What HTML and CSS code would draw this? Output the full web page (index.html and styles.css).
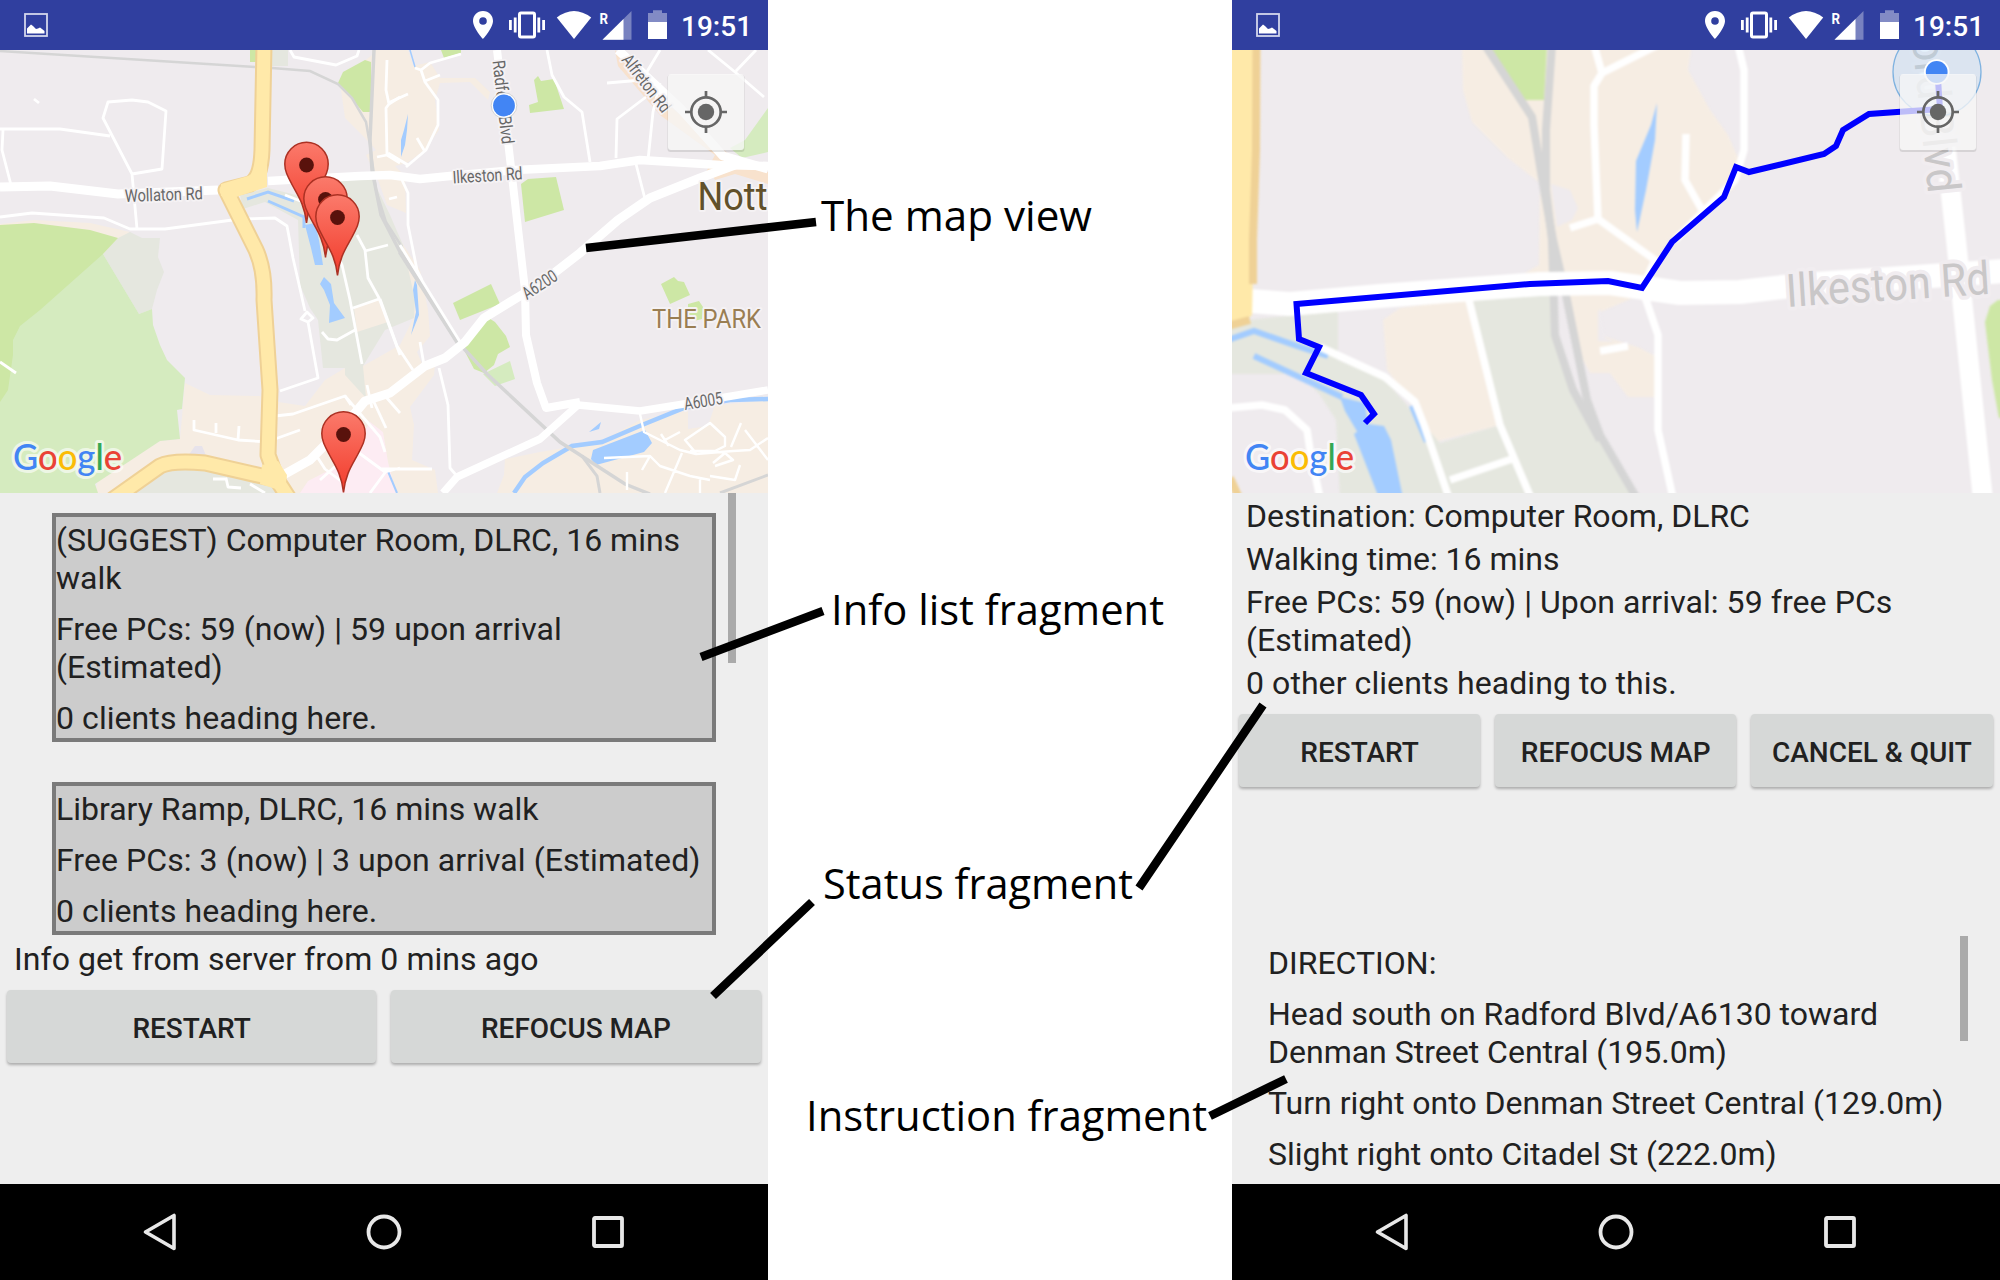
FILE: index.html
```html
<!DOCTYPE html>
<html lang="en">
<head>
<meta charset="utf-8">
<title>App fragments</title>
<link rel="stylesheet" href="styles.css">
</head>
<body>
<svg class="defs" width="0" height="0">
  <defs>
    <linearGradient id="pinFill" x1="0" y1="0" x2="0" y2="1"><stop offset="0" stop-color="#fb7a6b"/><stop offset="1" stop-color="#f23b2b"/></linearGradient>
    <symbol id="pic" viewBox="24 13 24 24">
      <rect x="25" y="14" width="22" height="22" fill="none" stroke="#d3d6ec" stroke-width="1.8"/>
      <path d="M27 33.500V28.500L29.500 26L31 24.500L33 26L36 29L38 28.500L40 27.500L42 29L44.500 31V33.500Z" fill="#fff"/>
    </symbol>
    <symbol id="status" viewBox="470 0 200 50">
      <path fill="#fff" fill-rule="evenodd" d="M483 11C477 11 473 15.500 473 21C473 28 483 39 483 39C483 39 493 28 493 21C493 15.500 489 11 483 11ZM483 17.200A3.800 3.800 0 1 1 483 24.800A3.800 3.800 0 1 1 483 17.200Z"/>
      <rect x="519.500" y="13" width="15" height="24" rx="1.500" fill="none" stroke="#fff" stroke-width="3"/>
      <path d="M515.200 17.500V32.500M510.400 20V30M538.800 17.500V32.500M543.600 20V30" stroke="#fff" stroke-width="2.800"/>
      <path d="M556.800 17.500Q574 4.500 591.200 17.500L574 39Z" fill="#fff"/>
      <text class="roam" x="599.500" y="23.500" textLength="8.500" lengthAdjust="spacingAndGlyphs">R</text>
      <path d="M602.500 39.700L631.500 11V39.700Z" fill="#fff" opacity=".35"/>
      <path d="M602.500 39.700L623.500 19V39.700Z" fill="#fff"/>
      <path d="M648 22V13H653V10.300H662V13H667V22Z" fill="#fff" opacity=".4"/>
      <path d="M648 22H667V39H648Z" fill="#fff"/>
    </symbol>
    <symbol id="back" viewBox="0 0 40 40"><path d="M34 3.500V36.500L5.500 20Z" fill="none" stroke="#e8e8e8" stroke-width="3.600" stroke-linejoin="round"/></symbol>
    <symbol id="home" viewBox="0 0 40 40"><circle cx="20" cy="20" r="15.500" fill="none" stroke="#e8e8e8" stroke-width="3.800"/></symbol>
    <symbol id="recent" viewBox="0 0 40 40"><rect x="6" y="6" width="28" height="28" rx="1" fill="none" stroke="#e8e8e8" stroke-width="3.800"/></symbol>
    <g id="pin">
      <path d="M0 58C-2 39 -9 30 -14.500 19.500C-19 11 -21.700 6 -21.700 -1A21.700 21.700 0 0 1 21.700 -1C21.700 6 19 11 14.500 19.500C9 30 2 39 0 58Z" fill="url(#pinFill)" stroke="#ac3123" stroke-width="1.500"/>
      <circle r="7.400" fill="#59120c"/>
    </g>
    <g id="target">
      <rect x="667.500" y="74.500" width="77" height="77.500" rx="3" fill="#000" opacity=".1"/>
      <rect x="668" y="74" width="76" height="76" rx="3" fill="#fff" opacity=".74"/>
      <circle cx="706" cy="112" r="14.700" fill="none" stroke="#666" stroke-width="2.700"/>
      <circle cx="706" cy="112" r="8.200" fill="#666"/>
      <path d="M706 91V98M706 126V133M685 112H692M720 112H727" stroke="#666" stroke-width="2.700"/>
    </g>
  </defs>
</svg>
<main class="board">
  <section class="phone">
    <header class="statusbar">
      <svg class="pic"><use href="#pic"/></svg>
      <svg class="status"><use href="#status"/></svg>
      <span class="clock">19:51</span>
    </header>
    <svg class="map" viewBox="0 50 768 443">
      <rect y="50" width="768" height="443" fill="#efebee"/>
      <g fill="#f6ede3">
        <path d="M0 224L34 220L90 223L130 232L118 240L100 260L60 235L0 230Z"/>
        <path d="M341 90L350 72L372 55L372 50H408L413 66L430 62L440 78L475 78L490 92L488 100L470 82L440 83L435 100L439 130L425 150L407 163L395 166L405 176L406 213L387 205L378 180L366 155L376 150L365 138L345 118Z"/>
        <path d="M185 383L210 395L260 396L278 402L305 406L325 380L345 368L363 366L400 345L414 317L354 333L351 308L380 299L400 240L420 270L428 310L430 336L417 352L424 368L435 365L434 375L410 407L414 425L412 460L435 470L438 493H95L98 480L160 441L180 439Z"/>
        <path d="M505 459L504 475L497 493H768V400L720 405L690 410L640 420L600 442L540 452Z"/>
        <path d="M615 50L625 62L672 108L730 155L715 175L706 172L715 155L660 115L618 66Z" fill="#f8e2cd"/>
        <path d="M708 168L722 154L768 172V184L735 174L715 180Z" fill="#f8e2cd"/>
      </g>
      <g fill="#e5e7df">
        <path d="M118 238L130 232L142 238L160 238L158 257L164 272L157 290L152 309L139 314L103 254Z"/>
        <path d="M240 195L268 188L300 196L305 187L345 178L372 178L390 215L403 245L415 300L414 318L385 330L363 366L366 398L345 375V368L323 368L318 320L310 308L300 285L298 220L265 202L243 209Z"/>
        <path d="M130 493L160 470L200 466L270 479L295 493Z"/>
        <path d="M272 50H288V66H272Z"/>
      </g>
      <path d="M354 308L380 299L388 322L357 332Z" fill="#f6ede3"/>
      <path d="M688 409L715 405L708 426L688 429Z" fill="#efebee"/>
      <path d="M300 493L308 481L345 462L370 422L383 432L388 462L396 493Z" fill="#fdecf3"/>
      <path d="M188 456L195 446L202 446L207 458Z" fill="#e7e3eb"/>
      <path d="M103 254L139 314L152 309L153 325L160 345L167 360L185 378L182 409L177 410L180 439L160 441L95 484L98 493H0V225H34Z" fill="#d5ebbf"/>
      <g fill="#cde7a5">
        <path d="M0 225L34 223L90 230L118 238L103 254L40 310L20 326L13 340L13 355L8 390L0 402Z"/>
        <path d="M343 72L365 60L371 62V112H363L338 83Z"/>
        <path d="M250 50H258V62H250Z"/>
        <path d="M441 50H461V53L444 58Z"/>
        <path d="M534 80L538 76L541 81L554 79L564 109L530 113L529 105L538 102Z"/>
        <path d="M521 184L528 179L556 177L564 210L525 222Z"/>
        <path d="M453 303L491 284L500 304L460 320Z"/>
        <path d="M463 348L484 315L495 322L506 336L510 347L498 354L494 365L484 373L474 369Z"/>
        <path d="M661 284L674 277L678 281L684 282L690 295L670 304Z"/>
        <path d="M688 304L699 301L703 307L702 319L694 321L688 315Z"/>
      </g>
      <path d="M483 374L510 361L515 379L495 386ZM745 140L768 108V152L742 158L730 148Z" fill="#d5ebbf"/>
      <g fill="#a3ccff">
        <path d="M305 225L315 223L319 240L323 265H315L311 248ZM324 277L331 284L334 303L345 318L329 323L330 305L324 290L320 284Z"/>
        <path d="M408 114L404 130L401 140L401 157L405 145L407 130ZM415 280L413 290L416 312L411 335L419 315L417 285Z"/>
        <path d="M593 450L645 430L652 443L644 452L596 465L591 459ZM589 432L601 422L599 429Z"/>
      </g>
      <g fill="none" stroke="#a3ccff" stroke-width="3">
        <path d="M247 199L268 192L294 201M268 201L304 217V228"/>
        <path d="M410 50L415 67" stroke-width="1.500"/>
        <path d="M514 493L525 477L543 463L572 446L602 442L642 425L684 408L730 400L768 399" stroke-width="4.500"/>
        <path d="M387 469L397 493" stroke-width="2"/>
      </g>
      <g fill="none" stroke="#d5d5d5" stroke-width="2.500">
        <path d="M0 51L255 67M272 68L310 71L338 84L352 98L366 122L370 145L376 190L386 222L402 247"/>
        <path d="M374 50L370 140L372 170L381 215L400 252L418 280L456 340L487 374L560 442L625 484L650 494" stroke-width="3.500"/>
        <path d="M400 252L460 346" stroke-width="4.500"/>
        <path d="M582 456L597 476L600 493M720 493L768 475" stroke-width="3"/>
      </g>
      <g fill="none" stroke="#fff" stroke-width="2.800" stroke-linejoin="round">
        <path d="M3 130L2 150L11 185M0 129H60L110 136M108 102L132 100L148 102L166 111L162 169L132 174L103 118ZM132 174L137 229M0 217L32 213L104 218L130 229L165 229L240 219L275 218L287 226L293 258L305 311M34 99L39 103"/>
        <path d="M0 187L50 186L118 194L218 190" stroke-width="9"/>
        <path d="M268 181L360 176L390 175L420 179L450 176L515 170L600 166L640 160L720 165L768 166" stroke-width="8.500"/>
        <path d="M0 362L16 373M280 391L318 378L308 322L301 319L307 312L313 318L308 322M275 416L293 414L345 396L351 405M275 439L300 430M194 420V430L238 440L268 442M216 423V433M239 426L238 440"/>
        <path d="M290 50L294 57L336 65L357 56L359 50M387 60L386 90L389 104L386 108L387 155L400 163M389 104L400 97M387 155L377 157M389 199L397 197"/>
        <path d="M285 195L303 202L325 230L342 265L350 300L362 364M357 235L365 250L368 278L379 298L400 355M365 251L388 245M353 308L379 299M355 330L337 340L328 339L322 332M367 385L372 408M386 397L400 413M345 396L380 437L385 452M373 400L386 428"/>
        <path d="M285 474L310 460L345 425L365 401L390 393L425 366L445 358L465 342L484 318L515 299L540 284L580 253L618 220L650 198L700 178L735 165" stroke-width="9"/>
        <path d="M497 50L509 150L521 255L525 290L526 335L537 383L546 408L580 402" stroke-width="8"/>
        <path d="M443 493L457 477L540 439L578 405L640 411L690 403L768 390" stroke-width="7.500"/>
        <path d="M400 245L462 345M402 180L408 193L408 225L417 270L422 280M380 299L397 346L413 370M420 342L424 365M439 368L448 405L450 468L456 475"/>
        <path d="M461 54L430 63L421 70L425 82L438 100L438 125L426 150L406 167M421 70L415 68M425 81L440 75M388 103L408 94M417 138L424 150M388 153L408 165"/>
        <path d="M547 50L552 75L564 97L582 112L590 162M660 50L642 80L607 83M660 83L653 112L648 160M646 97L617 119L616 158M636 164L645 199M708 50L735 72L764 97M756 50L736 71"/>
        <path d="M618 50L680 108L723 156L768 169" stroke-width="9"/>
        <path d="M640 414L644 432L680 450L696 454L733 451L750 450L768 438M696 453L685 440L710 423L725 437V446L715 451L690 451M741 423L731 447M680 432L665 440L668 445L661 434M745 430L768 460M713 463L725 453L733 460L715 466M604 458L650 456L660 466L690 476L710 480M627 472V490M650 456L642 470M665 493L682 453M700 477V493M710 476L735 480L740 465" stroke-width="2.400"/>
        <path d="M316 455L325 469L345 484M320 480L340 462M355 450L385 472L400 468M387 470L370 493M250 484L265 493M226 478L228 487L241 488M213 479H227M380 469H432"/>
      </g>
      <g fill="none" stroke-linejoin="round">
        <g stroke="#efd196" stroke-width="17"><path d="M264 45L262 150Q261 178 250 184L226 190L256 250Q265 270 264 300L270 390L268 455L277 480L290 500"/><path d="M112 500L160 466Q172 460 205 463L275 479"/></g>
        <g stroke="#ffe9a9" stroke-width="13"><path d="M264 45L262 150Q261 178 250 184L226 190L256 250Q265 270 264 300L270 390L268 455L277 480L290 500"/><path d="M112 500L160 466Q172 460 205 463L275 479"/></g>
      </g>
      <path d="M221 184L248 176L267 165L267 187L236 197L221 196Z" fill="#ffe9a9"/>
      <path d="M262 465L278 461L287 475L285 490L276 489L260 484Z" fill="#ffe9a9"/>
      <g class="road">
        <text transform="translate(125 202) rotate(-2)" textLength="78" lengthAdjust="spacingAndGlyphs">Wollaton Rd</text>
        <text transform="translate(453 183.500) rotate(-3.500)" textLength="70" lengthAdjust="spacingAndGlyphs">Ilkeston Rd</text>
        <text transform="translate(492.500 61) rotate(83.500)" textLength="84" lengthAdjust="spacingAndGlyphs">Radford Blvd</text>
        <text transform="translate(621 60) rotate(52.500)" textLength="68" lengthAdjust="spacingAndGlyphs">Alfreton Rd</text>
        <text transform="translate(527 300) rotate(-33)" textLength="38" lengthAdjust="spacingAndGlyphs">A6200</text>
        <text transform="translate(685 410) rotate(-9)" textLength="39" lengthAdjust="spacingAndGlyphs">A6005</text>
        <text class="park" x="652" y="327.500" textLength="109" lengthAdjust="spacingAndGlyphs">THE PARK</text>
        <text class="city" x="697.500" y="210" textLength="70" lengthAdjust="spacingAndGlyphs">Nott</text>
      </g>
      <circle cx="504" cy="105.500" r="12.800" fill="#fff" stroke="#bbb" stroke-width=".6"/><circle cx="504" cy="105.500" r="10.900" fill="#4285f4"/>
      <use href="#pin" x="306.500" y="165"/><use href="#pin" x="325.500" y="199.500"/><use href="#pin" x="337.500" y="217.500"/><use href="#pin" x="343.500" y="434.500"/>
      <text class="google" x="13" y="469.500" textLength="109" lengthAdjust="spacingAndGlyphs"><tspan fill="#4285f4">G</tspan><tspan fill="#ea4335">o</tspan><tspan fill="#fbbc05">o</tspan><tspan fill="#4285f4">g</tspan><tspan fill="#34a853">l</tspan><tspan fill="#ea4335">e</tspan></text>
      <use href="#target"/>
    </svg>
    <div class="content">
      <div class="list">
        <article class="card">
          <p>(SUGGEST) Computer Room, DLRC, 16 mins<br>walk</p>
          <p class="loose">Free PCs: 59 (now) | 59 upon arrival<br>(Estimated)</p>
          <p class="loose">0 clients heading here.</p>
        </article>
        <article class="card">
          <p>Library Ramp, DLRC, 16 mins walk</p>
          <p class="loose">Free PCs: 3 (now) | 3 upon arrival (Estimated)</p>
          <p class="loose">0 clients heading here.</p>
        </article>
        <i class="scrollbar"></i>
      </div>
      <p class="info loose">Info get from server from 0 mins ago</p>
      <div class="buttons"><button>RESTART</button><button>REFOCUS MAP</button></div>
    </div>
    <nav class="navbar">
      <svg><use href="#back"/></svg><svg><use href="#home"/></svg><svg><use href="#recent"/></svg>
    </nav>
  </section>

  <section class="phone">
    <header class="statusbar">
      <svg class="pic"><use href="#pic"/></svg>
      <svg class="status"><use href="#status"/></svg>
      <span class="clock">19:51</span>
    </header>
    <svg class="map" viewBox="1232 50 768 443">
      <rect x="1232" y="50" width="768" height="443" fill="#efebee"/>
      <g class="terrain">
        <g fill="#f6ede3">
          <path d="M1462 45L1463 90L1472 122L1508 158L1540 183L1539 265L1525 273L1600 276L1645 282L1668 240L1700 215L1735 188L1741 165L1728 135L1710 110L1688 70L1692 45Z"/>
          <path d="M1383 320L1400 308L1470 299L1500 425L1435 442L1410 400L1387 370Z"/>
          <path d="M1562 292L1640 295L1600 312L1600 335L1640 348L1655 356V397H1628L1610 373L1590 373L1575 345Z"/>
        </g>
        <path d="M1551 184L1570 190L1578 208L1572 220L1557 227ZM1600 308L1605 338L1615 342L1598 341L1598 312Z" fill="#efebee"/>
        <path d="M1226 322L1338 311V360L1385 380L1440 443L1500 425L1472 299L1550 293L1565 370L1636 498H1340L1336 420L1320 395L1300 374H1226Z" fill="#e5e7df"/>
        <path d="M1485 45H1547L1544 100H1525ZM2005 300H1998L1990 306L1985 322L1992 380L1999 418H2005Z" fill="#cde7a5"/>
        <path d="M1657 103L1651 125L1636 161L1635 210L1637 232L1646 190L1655 140ZM1340 397L1365 403L1368 425L1358 433L1345 411ZM1354 434L1368 424L1384 426L1391 440L1403 498H1379Z" fill="#a3ccff"/>
        <path d="M1228 340L1254 331L1300 347L1328 356M1254 356L1342 397" fill="none" stroke="#a3ccff" stroke-width="6"/>
        <path d="M1411 406L1426 442" stroke="#a3ccff" stroke-width="4"/>
        <g fill="none" stroke="#d5d5d5" stroke-width="8">
          <path d="M1485 45L1532 117L1544 190L1553 240L1567 300L1587 400L1600 435L1636 497"/>
          <path d="M1552 45L1546 130V190L1552 240L1555 335L1573 390L1600 440"/>
        </g>
        <g fill="none" stroke="#fff" stroke-width="7.500" stroke-linejoin="round">
          <path d="M1250 301L1290 304L1380 296L1540 284L1610 283L1680 293L1740 292L1800 285L2005 271" stroke-width="24"/>
          <path d="M1924 45L1946 150L1956 240L1983 500" stroke-width="20"/>
          <path d="M1594 45L1602 73L1658 45M1602 73L1594 86V125L1598 219L1570 228M1598 219L1655 260L1645 282M1738 45L1744 70V150L1735 180L1675 240M1686 134L1685 180L1702 210"/>
          <path d="M1645 297L1658 335V430L1673 498M1469 300L1500 425L1531 498M1450 480L1512 459M1600 351L1628 346M1320 347L1385 377L1415 402L1424 425L1449 498M1228 408L1262 405L1285 410L1307 430L1310 450L1320 498"/>
        </g>
        <path d="M1226 45H1258L1252 315L1243 323L1226 327Z" fill="#ffe9a9"/>
        <path d="M1256.500 45L1256 150L1253 240V284M1228 326L1250 320M1230 478L1240 500" stroke="#efd196" stroke-width="8" fill="none"/>
      </g>
      <text class="big" transform="translate(1787 307) rotate(-3.700)" textLength="204" lengthAdjust="spacingAndGlyphs">Ilkeston Rd</text>
      <text class="big" transform="translate(1912 38) rotate(84)" textLength="157" lengthAdjust="spacingAndGlyphs">ord Blvd</text>
      <circle cx="1937" cy="72" r="44" fill="#add5f5" fill-opacity=".3" stroke="#7fb2e0" stroke-width="1.300"/>
      <path class="route" d="M1365 423L1374 414L1361 395L1306 373L1319 347L1299 339L1296.500 304L1530 284L1608 281L1642 288L1672 242L1724 197L1736 167L1749 172L1824 154L1836 146L1843 130L1869 114L1940 109L1938 80"/>
      <circle cx="1936.700" cy="72" r="12.800" fill="#fff"/><circle cx="1936.700" cy="72" r="10.900" fill="#4285f4"/>
      <text class="google" x="1245" y="469.500" textLength="109" lengthAdjust="spacingAndGlyphs"><tspan fill="#4285f4">G</tspan><tspan fill="#ea4335">o</tspan><tspan fill="#fbbc05">o</tspan><tspan fill="#4285f4">g</tspan><tspan fill="#34a853">l</tspan><tspan fill="#ea4335">e</tspan></text>
      <use href="#target" x="1232"/>
    </svg>
    <div class="content">
      <div class="summary">
        <p>Destination: Computer Room, DLRC</p>
        <p>Walking time: 16 mins</p>
        <p class="loose">Free PCs: 59 (now) | Upon arrival: 59 free PCs<br>(Estimated)</p>
        <p class="loose">0 other clients heading to this.</p>
      </div>
      <div class="buttons"><button>RESTART</button><button>REFOCUS MAP</button><button>CANCEL &amp; QUIT</button></div>
      <div class="directions">
        <p>DIRECTION:</p>
        <p>Head south on Radford Blvd/A6130 toward<br>Denman Street Central (195.0m)</p>
        <p>Turn right onto Denman Street Central (129.0m)</p>
        <p>Slight right onto Citadel St (222.0m)</p>
        <i class="scrollbar"></i>
      </div>
    </div>
    <nav class="navbar">
      <svg><use href="#back"/></svg><svg><use href="#home"/></svg><svg><use href="#recent"/></svg>
    </nav>
  </section>

  <svg class="notes" viewBox="0 0 2000 1280">
    <path d="M586 248L816 222M701 657L823 611M713 996L812 902M1139 888L1263 705M1210 1116L1286 1079"/>
    <text x="821" y="231" textLength="271" lengthAdjust="spacingAndGlyphs">The map view</text>
    <text x="831" y="625" textLength="333" lengthAdjust="spacingAndGlyphs">Info list fragment</text>
    <text x="823" y="899" textLength="310" lengthAdjust="spacingAndGlyphs">Status fragment</text>
    <text x="806" y="1131" textLength="401" lengthAdjust="spacingAndGlyphs">Instruction fragment</text>
  </svg>
</main>
</body>
</html>
```
FILE: styles.css
```css
* { box-sizing: border-box; }
body { margin: 0; background: #fff; font-family: Roboto, sans-serif; color: #212121; }
p { margin: 0; }
.defs { position: absolute; }
.board { position: relative; display: flex; justify-content: space-between; width: 2000px; height: 1280px; overflow: hidden; }
.phone { display: flex; flex-direction: column; width: 768px; height: 1280px; background: #eee; }

.statusbar { display: flex; align-items: center; height: 50px; padding: 0 19px 0 24px; background: #303f9f; color: #fff; }
.pic { width: 24px; height: 24px; }
.status { width: 200px; height: 50px; margin-left: auto; }
.clock { width: 68px; margin-left: 11px; padding-top: 2px; text-align: center; font-size: 28px; font-weight: 500; line-height: 33px; white-space: nowrap; }
.roam { font: 700 15.5px Roboto, sans-serif; fill: #fff; }

.map { display: block; width: 768px; height: 443px; flex: none; }
.road text { font: 17.5px Roboto, sans-serif; fill: #666; stroke: #f5f2f4; stroke-width: 4px; stroke-linejoin: round; paint-order: stroke; }
.road .park { font-size: 26px; fill: #9a7e52; }
.road .city { font-size: 38px; fill: #61502a; }
.terrain { filter: blur(0.8px); }
.big { font: 46px Roboto, sans-serif; fill: #c9c7c8; stroke: #f1edf0; stroke-width: 8px; stroke-linejoin: round; paint-order: stroke; }
.google { font: 500 36px Lato, sans-serif; stroke: rgba(255, 255, 255, 0.6); stroke-width: 6px; stroke-linejoin: round; paint-order: stroke; }
.route { fill: none; stroke: #00f; stroke-width: 6px; }

.content { flex: 1; display: flex; flex-direction: column; font-size: 32px; line-height: 38px; white-space: nowrap; }
.loose { letter-spacing: 0.07px; }
.list { position: relative; display: flex; flex-direction: column; gap: 40px; padding: 20px 52px 0; }
.card { display: flex; flex-direction: column; gap: 13px; padding: 4px 0 1px; border: 4px solid #7a7a7a; background: #ccc; }
.scrollbar { position: absolute; top: 0; right: 32px; width: 8px; height: 170px; background: #aaa; }
.info { padding: 5px 14px 0; }
.buttons { display: flex; gap: 15px; padding: 12px 7.5px 0 7px; }
button { flex: 1 1 0; height: 73px; padding: 4px 0 0; border: 0; border-radius: 4px; background: #d6d8d7; box-shadow: 0 2px 3px rgba(0, 0, 0, 0.28); color: #212121; font: 500 28px Roboto, sans-serif; white-space: nowrap; }
.summary { display: flex; flex-direction: column; gap: 5px; padding: 4px 14px 0; }
.directions { position: relative; display: flex; flex-direction: column; gap: 13px; margin-top: 149px; padding: 8px 36px 0; }
.directions .scrollbar { height: 105px; }

.navbar { display: flex; justify-content: space-between; align-items: center; height: 96px; padding: 0 140px; background: #000; }
.navbar svg { width: 40px; height: 40px; }

.notes { position: absolute; left: 0; top: 0; width: 2000px; height: 1280px; pointer-events: none; }
.notes path { fill: none; stroke: #000; stroke-width: 8.5px; }
.notes text { font: 42px "Open Sans", sans-serif; fill: #000; }
```
